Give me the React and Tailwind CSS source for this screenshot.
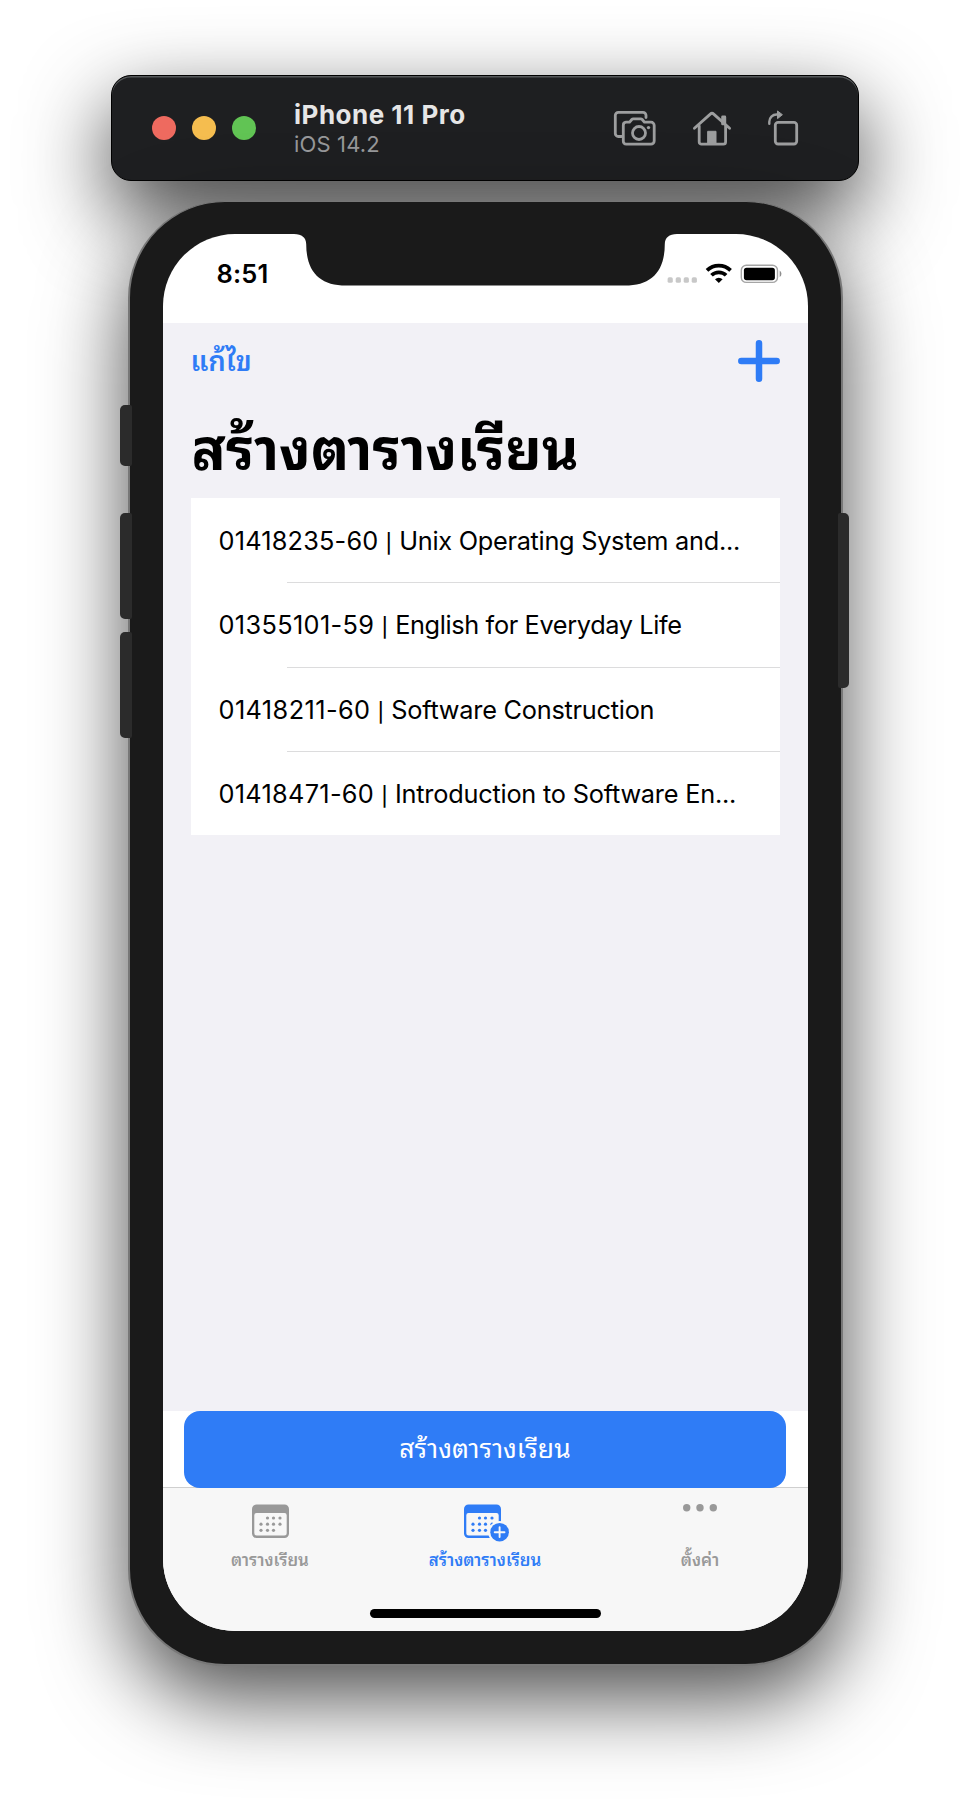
const courses = [
  { code: "01418235-60", title: "Unix Operating System and...", codeSpacing: "tracking-[0.2px]", titleSpacing: "tracking-[-0.28px]" },
  { code: "01355101-59", title: "English for Everyday Life", codeSpacing: "tracking-[0.36px]", titleSpacing: "tracking-[-0.36px]" },
  { code: "01418211-60", title: "Software Construction", codeSpacing: "tracking-[0.42px]", titleSpacing: "tracking-[-0.24px]" },
  { code: "01418471-60", title: "Introduction to Software En...", codeSpacing: "tracking-[0.3px]", titleSpacing: "tracking-[-0.21px]" },
];

function ScreenshotIcon() {
  return (
    <svg width="44" height="38" viewBox="0 0 44 38" fill="none" stroke="#9d9e9f" strokeWidth="2.8" strokeLinejoin="round" strokeLinecap="round">
      <path d="M9.5 27.5H6.3A3 3 0 0 1 3.3 24.5V6.3A3 3 0 0 1 6.3 3.3H31A3 3 0 0 1 34 6.3V8.5" />
      <path d="M14 13.2h3.6l2.2-2.7a2 2 0 0 1 1.5-.7h7.4a2 2 0 0 1 1.5.7l2.2 2.7H39a3.2 3.2 0 0 1 3.2 3.2V32a3.2 3.2 0 0 1-3.2 3.2H14.2A3 3 0 0 1 11.3 32V16.2a3 3 0 0 1 2.7-3z" />
      <circle cx="27" cy="24" r="6.5" />
      <circle cx="36.5" cy="18.6" r="1.7" fill="#9d9e9f" stroke="none" />
    </svg>
  );
}

function HomeIcon() {
  return (
    <svg width="40" height="38" viewBox="0 0 40 38" fill="none" stroke="#9d9e9f" strokeWidth="2.8" strokeLinejoin="round" strokeLinecap="round">
      <path d="M2.4 19.3 18.3 5.1a2.5 2.5 0 0 1 3.4 0L37.6 19.3" />
      <path d="M7.2 17v16a2.2 2.2 0 0 0 2.2 2.2h22a2.2 2.2 0 0 0 2.2-2.2V17" />
      <path d="M30.6 7.9h2.2v7h-2.2z" />
      <path d="M16 22.3h8V35h-8z" fill="#9d9e9f" strokeWidth="1" />
    </svg>
  );
}

function RotateIcon() {
  return (
    <svg width="34" height="38" viewBox="0 0 34 38" fill="none" stroke="#9d9e9f" strokeWidth="2.8" strokeLinejoin="round" strokeLinecap="round">
      <rect x="8.3" y="13.3" width="21.4" height="21.7" rx="2.8" />
      <path d="M2.3 14.8V12.7a7.2 7.2 0 0 1 7.2-7.2H11" strokeWidth="2.4" />
      <path d="M10.8 2.2 15.4 5.7 10.8 9.4z" fill="#9d9e9f" strokeWidth="1" />
    </svg>
  );
}

function Notch() {
  return (
    <svg className="absolute left-[131px] top-0" width="383" height="52" viewBox="0 0 383 52">
      <path d="M0 0C8 .2 12 3.5 12.2 10C12.2 38 26 51.6 52 51.6H331C357 51.6 370.800 38 370.800 10C371 3.500 375 .2 383 0Z" fill="#1a1a1a" />
    </svg>
  );
}

function StatusIcons() {
  return (
    <svg className="absolute left-[503px] top-[28px]" width="120" height="26" viewBox="0 0 120 26">
      <g fill="#c8c8c8">
        <rect x="1.600" y="15.300" width="5.200" height="5.500" rx="1.600" />
        <rect x="9.700" y="15.300" width="5.200" height="5.500" rx="1.600" />
        <rect x="17.700" y="15.300" width="5.200" height="5.500" rx="1.600" />
        <rect x="25.700" y="15.300" width="5.200" height="5.500" rx="1.600" />
      </g>
      <g fill="none" stroke="#000" strokeWidth="3.700">
        <path d="M41 8.400a16.800 16.800 0 0 1 23.600 0" />
        <path d="M45.500 13.300a10.400 10.400 0 0 1 14.600 0" />
      </g>
      <path d="M52.800 21 49 17.200a5.400 5.400 0 0 1 7.600 0z" fill="#000" />
      <rect x="75.300" y="3.200" width="36.200" height="17.200" rx="5" fill="none" stroke="#a5a5a5" strokeWidth="1.400" />
      <rect x="77.900" y="5.800" width="31" height="12.400" rx="2.600" fill="#000" />
      <path d="M113.700 8.400a4 4 0 0 1 0 6.600z" fill="#8e8e8e" />
    </svg>
  );
}

const dots = [
  [15.5, 14], [21.500, 14], [28, 14],
  [9, 20.200], [15.500, 20.200], [21.500, 20.200], [28, 20.200],
  [9, 26.300], [15.500, 26.300], [21.500, 26.300],
];

function CalendarIcon({ badge }) {
  return (
    <svg width="46" height="38" viewBox="0 0 46 38" fill="currentColor">
      <path fillRule="evenodd" d="M4.500 .5H32.500A4.500 4.500 0 0 1 37 5V29.500A4.500 4.500 0 0 1 32.500 34H4.500A4.500 4.500 0 0 1 0 29.500V5A4.500 4.500 0 0 1 4.500 .5ZM4.500 9A2.200 2.200 0 0 0 2.300 11.200V29A2.500 2.500 0 0 0 4.800 31.500H32.200A2.500 2.500 0 0 0 34.700 29V11.200A2.200 2.200 0 0 0 32.500 9Z" />
      {dots.map(([x, y]) => <circle key={`${x}-${y}`} cx={x} cy={y} r="1.600" />)}
      {badge && (
        <g>
          <circle cx="35.600" cy="28.200" r="11.300" fill="#f7f7f7" />
          <circle cx="35.600" cy="28.200" r="9.300" />
          <path d="M35.600 23.300v9.800M30.700 28.200h9.800" stroke="#f7f7f7" strokeWidth="1.900" strokeLinecap="round" />
        </g>
      )}
    </svg>
  );
}

function Simulator() {
  return (
    <div className="flex h-[1814px] w-[970px] flex-col items-center overflow-hidden bg-white font-['Inter','Noto_Sans_Thai_Looped','Thonburi','Loma','Garuda','Waree','Sarabun','Tlwg_Typo','Noto_Serif_Thai','FreeSerif',sans-serif]">
      <header className="relative mt-[75px] flex h-[106px] w-[748px] items-center rounded-[20px] border border-black bg-[#1e1f21] px-[40px] shadow-[inset_0_1.500px_0_#55585a,0_32px_84px_rgba(0,0,0,0.76)]">
        <div className="flex gap-4">
          <span className="size-6 rounded-full bg-[#ee6a5f]" />
          <span className="size-6 rounded-full bg-[#f5bd4f]" />
          <span className="size-6 rounded-full bg-[#61c454]" />
        </div>
        <div className="ml-[38px] grow">
          <div className="text-[26px] leading-[32px] font-bold tracking-[0.5px] text-[#e6e6e6]">iPhone 11 Pro</div>
          <div className="text-[22px] leading-[27px] tracking-[0.15px] text-[#97989a]">iOS 14.2</div>
        </div>
        <div className="mb-[1px] flex items-center">
          <ScreenshotIcon />
          <span className="ml-[36px] flex"><HomeIcon /></span>
          <span className="ml-[35px] mr-[17px] flex"><RotateIcon /></span>
        </div>
      </header>

      <div className="relative mt-5 h-[1465px] w-[715px]">
        <div className="relative h-full rounded-[97px] border-2 border-t border-[#777] bg-[#1a1a1a] px-[33px] pt-[32px] pb-[31px] shadow-[0_32px_84px_rgba(0,0,0,0.7)]">
          <div className="relative flex h-[1397px] w-[645px] flex-col overflow-hidden rounded-[72px] bg-white">
            <Notch />
            <StatusIcons />
            <div className="flex h-[89px] shrink-0 items-start pt-[24px] pl-[54px] text-[25.500px] leading-[32px] font-semibold tracking-[0.2px]">8:51</div>
            <main className="flex grow flex-col bg-[#f2f1f6] px-7">
              <div className="flex h-[76px] items-center justify-between text-[#2f7cf6]">
                <span className="text-[27.500px] leading-[40px] font-semibold">แก้ไข</span>
                <svg width="42" height="42" viewBox="0 0 42 42" fill="none" stroke="#2f7cf6" strokeWidth="6.500" strokeLinecap="round">
                  <path d="M21 3.300V38.700M3.300 21H38.700" />
                </svg>
              </div>
              <h1 className="h-[99px] pt-[13px] pl-px text-[56.700px] leading-[76px] font-bold whitespace-nowrap">สร้างตารางเรียน</h1>
              <ul className="bg-white">
                {courses.map((course, i) => (
                  <li key={course.code} className="h-[84.300px]">
                    <div className="h-full pl-[28px] text-[25.300px] leading-[86px] whitespace-pre">
                      <span className={course.codeSpacing}>{course.code}</span>
                      {" "}
                      <span className="text-[19px] font-medium">|</span>
                      {" "}
                      <span className={course.titleSpacing}>{course.title}</span>
                    </div>
                    {i < courses.length - 1 && <div className="ml-[96px] h-px bg-[#dcdcdd]" />}
                  </li>
                ))}
              </ul>
            </main>
            <div className="flex h-[77px] shrink-0 justify-center bg-white">
              <button className="z-10 h-[77px] w-[602px] rounded-[16px] bg-[#2f7cf6] pb-[2px] text-[26.500px] text-white">สร้างตารางเรียน</button>
            </div>
            <nav className="-mt-px h-[144px] shrink-0 border-t border-[#cfcfcf] bg-[#f7f7f7] pt-4">
              <div className="grid grid-cols-3 text-[16.800px] font-semibold text-[#999]">
                <div className="flex flex-col items-center">
                  <span className="w-[37px]"><CalendarIcon /></span>
                  <span className="mt-[5px] leading-[26px]">ตารางเรียน</span>
                </div>
                <div className="flex flex-col items-center text-[#2f7cf6]">
                  <span className="-mr-1"><CalendarIcon badge /></span>
                  <span className="mt-[5px] leading-[26px]">สร้างตารางเรียน</span>
                </div>
                <div className="flex flex-col items-center">
                  <svg width="36" height="38" viewBox="0 0 36 38" fill="#999">
                    <circle cx="4.700" cy="3.800" r="3.700" /><circle cx="18" cy="3.800" r="3.700" /><circle cx="31.300" cy="3.800" r="3.700" />
                  </svg>
                  <span className="mt-[5px] leading-[26px]">ตั้งค่า</span>
                </div>
              </div>
              <div className="mx-auto mt-[36px] h-[9px] w-[231px] rounded-full bg-black" />
            </nav>
          </div>
        </div>
        <span className="absolute top-[204px] left-[-8px] h-[61px] w-3 rounded-l-[5px] rounded-r-[2px] bg-[#2b2b2b]" />
        <span className="absolute top-[312px] left-[-8px] h-[106px] w-3 rounded-l-[5px] rounded-r-[2px] bg-[#2b2b2b]" />
        <span className="absolute top-[431px] left-[-8px] h-[106px] w-3 rounded-l-[5px] rounded-r-[2px] bg-[#2b2b2b]" />
        <span className="absolute top-[312px] right-[-6px] h-[175px] w-[11px] rounded-r-[5px] rounded-l-[2px] bg-[#2b2b2b]" />
      </div>
    </div>
  );
}

export default function App() {
  return <Simulator />;
}
